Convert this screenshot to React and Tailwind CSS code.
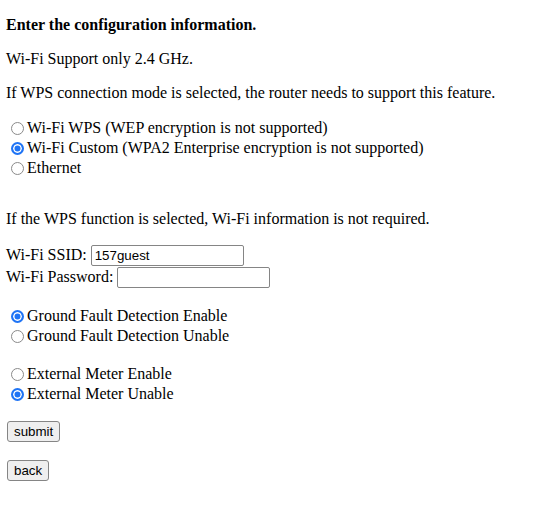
import { useState } from "react";

function Radio({ name, label, checked, onChange }) {
  return (
    <label className="flex h-[20px] items-center">
      <input
        type="radio"
        name={name}
        checked={checked}
        onChange={onChange}
        className="m-0 ml-[5px] mr-[3px] h-[13px] w-[13px] shrink-0 appearance-none rounded-full border border-[#8a8a8a] bg-white checked:border-2 checked:border-[#1f74f5] checked:bg-[#1f74f5] checked:shadow-[inset_0_0_0_1.5px_white]"
      />
      <span>{label}</span>
    </label>
  );
}

export default function App() {
  const [mode, setMode] = useState("custom");
  const [ground, setGround] = useState("enable");
  const [meter, setMeter] = useState("unable");
  const [ssid, setSsid] = useState("157guest");
  const [pwd, setPwd] = useState("");

  const field = "h-[21px] rounded-[2px] border border-[#858585] bg-white px-[3px] font-['Liberation_Sans',Arial,sans-serif] text-[13.33px] text-black outline-none";
  const btn = "h-[21px] rounded-[3px] border border-[#858585] bg-[#efefef] px-[6px] font-['Liberation_Sans',Arial,sans-serif] text-[13.33px] text-black";

  return (
    <div className="min-h-[516px] bg-white px-[6px] pt-[16px] font-['Liberation_Serif','Times_New_Roman',serif] text-[16px] leading-[18px] text-black">
      <p className="font-bold">Enter the configuration information.</p>
      <p className="mt-[16px]">Wi-Fi Support only 2.4 GHz.</p>
      <p className="mt-[16px]">If WPS connection mode is selected, the router needs to support this feature.</p>

      <div className="mt-[16px]">
        <Radio name="mode" label="Wi-Fi WPS (WEP encryption is not supported)" checked={mode === "wps"} onChange={() => setMode("wps")} />
        <Radio name="mode" label="Wi-Fi Custom (WPA2 Enterprise encryption is not supported)" checked={mode === "custom"} onChange={() => setMode("custom")} />
        <Radio name="mode" label="Ethernet" checked={mode === "eth"} onChange={() => setMode("eth")} />
      </div>

      <p className="mt-[32px]">If the WPS function is selected, Wi-Fi information is not required.</p>

      <div className="mt-[16px]">
        <div className="flex h-[22px] items-center">
          <span>Wi-Fi SSID:&nbsp;</span>
          <input value={ssid} onChange={(e) => setSsid(e.target.value)} className={`${field} w-[153px]`} />
        </div>
        <div className="flex h-[22px] items-center">
          <span>Wi-Fi Password:&nbsp;</span>
          <input type="password" value={pwd} onChange={(e) => setPwd(e.target.value)} className={`${field} w-[153px]`} />
        </div>
      </div>

      <div className="mt-[18px]">
        <Radio name="ground" label="Ground Fault Detection Enable" checked={ground === "enable"} onChange={() => setGround("enable")} />
        <Radio name="ground" label="Ground Fault Detection Unable" checked={ground === "unable"} onChange={() => setGround("unable")} />
      </div>

      <div className="mt-[18px]">
        <Radio name="meter" label="External Meter Enable" checked={meter === "enable"} onChange={() => setMeter("enable")} />
        <Radio name="meter" label="External Meter Unable" checked={meter === "unable"} onChange={() => setMeter("unable")} />
      </div>

      <div className="mt-[17px] flex flex-col items-start gap-[18px] pl-[1px]">
        <button className={btn}>submit</button>
        <button className={btn}>back</button>
      </div>
    </div>
  );
}
